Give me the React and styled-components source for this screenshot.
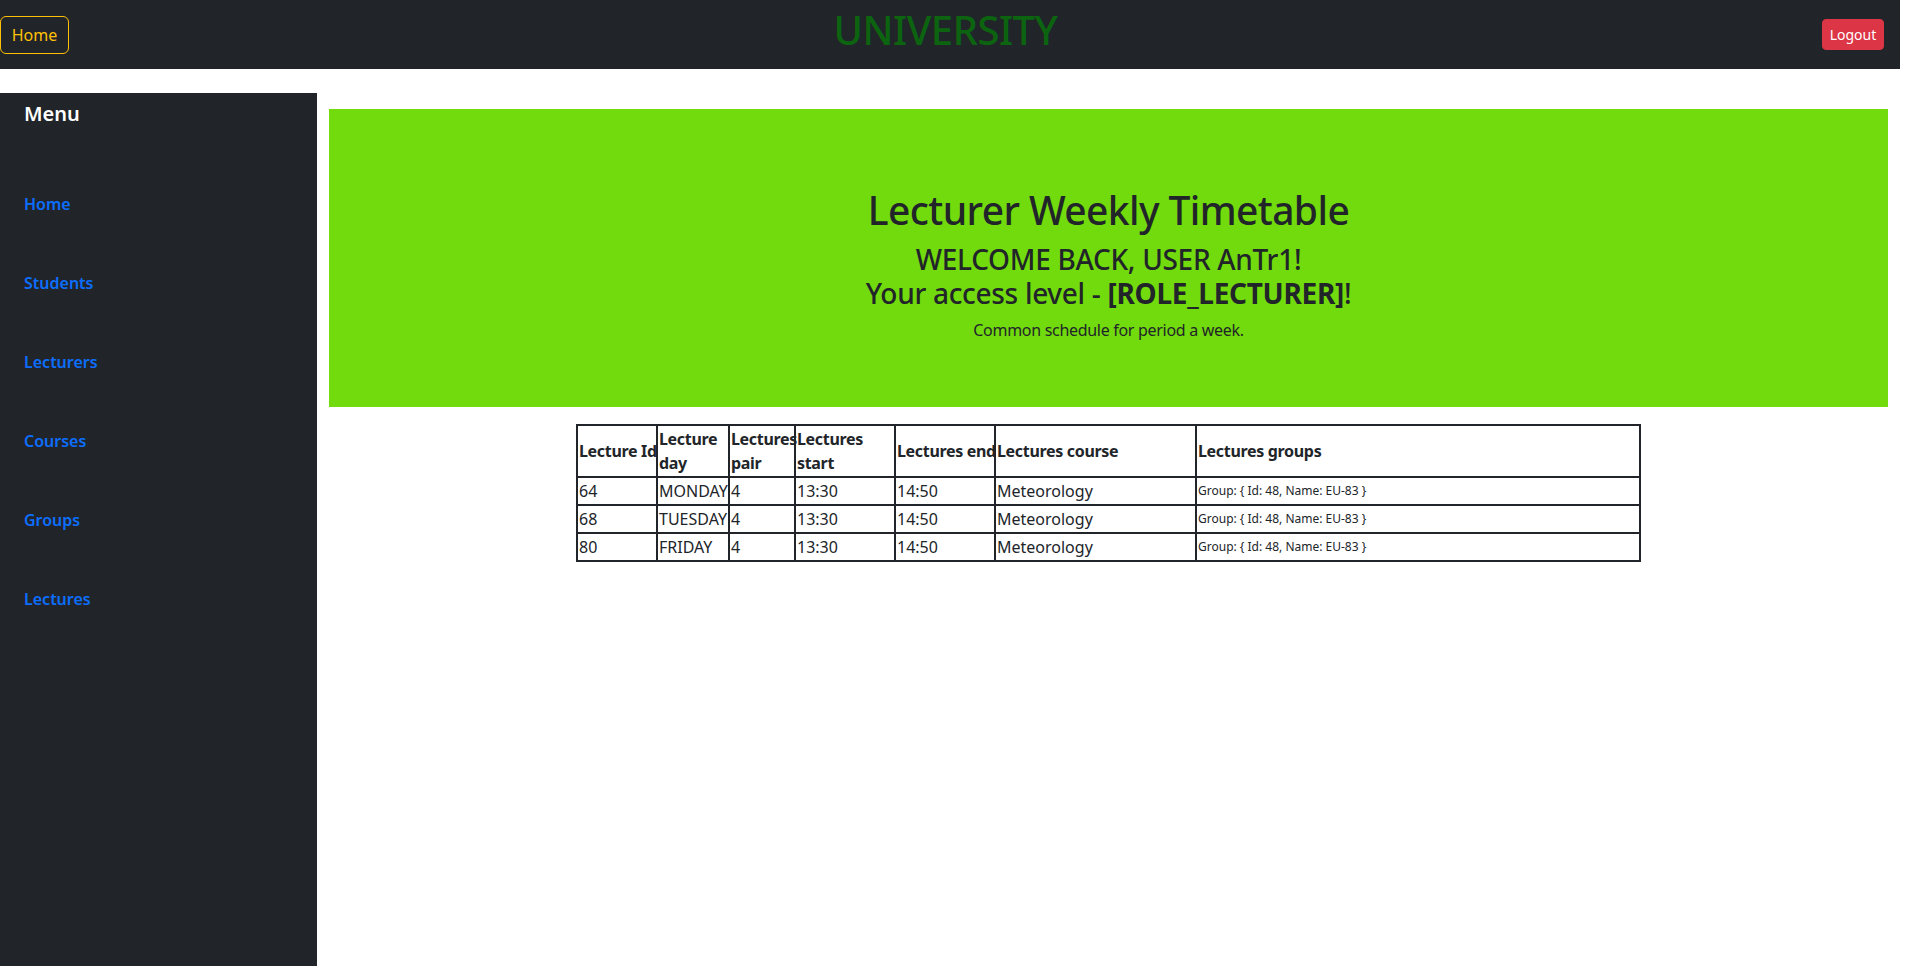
import React from "react";
import styled, { createGlobalStyle } from "styled-components";

const Global = createGlobalStyle`
  html, body { margin: 0; padding: 0; background: #fff; }
  body {
    font-family: "Noto Sans", "Open Sans", "Liberation Sans", sans-serif;
    font-size: 16px;
    line-height: 1.5;
    color: #212529;
  }
  * { box-sizing: border-box; }
`;

const Page = styled.div`
  width: calc(100vw - 17px);
`;

const Navbar = styled.header`
  height: 69px;
  background: #212529;
  display: flex;
  align-items: center;
  justify-content: space-between;
  padding: 0 16px 0 0;
`;

const OutlineButton = styled.button`
  font-family: inherit;
  font-size: 16px;
  line-height: 24px;
  height: 38px;
  width: 69px;
  padding: 6px 0;
  color: #ffc107;
  background: transparent;
  border: 1px solid #ffc107;
  border-radius: 6px;
  margin-top: 1px;
`;

const Brand = styled.h1`
  margin: 0 0 10px 0;
  font-size: 40px;
  line-height: 48px;
  font-weight: 500;
  letter-spacing: -0.5px;
  color: #0c6410;
`;

const DangerButton = styled.button`
  font-family: inherit;
  font-size: 14px;
  line-height: 21px;
  height: 31px;
  width: 62px;
  padding: 4px 0;
  color: #fff;
  background: #dc3545;
  border: 1px solid #dc3545;
  border-radius: 4px;
`;

const Layout = styled.div`
  display: flex;
  align-items: flex-start;
  margin-top: 24px;
`;

const Sidebar = styled.aside`
  flex: 0 0 317px;
  width: 317px;
  height: 100vh;
  background: #212529;
  padding: 9px 24px;
`;

const MenuTitle = styled.h5`
  margin: 0;
  font-size: 20px;
  line-height: 24px;
  font-weight: 600;
  color: #fff;
`;

const NavList = styled.nav`
  display: flex;
  flex-direction: column;
  gap: 55px;
  margin-top: 66px;
`;

const NavLink = styled.a`
  font-size: 16px;
  line-height: 24px;
  font-weight: 600;
  color: #0d6efd;
  text-decoration: none;
`;

const Main = styled.main`
  flex: 1;
  min-width: 0;
  padding: 16px 12px 0;
`;

const Banner = styled.section`
  background: #72db0d;
  height: 298px;
  padding-top: 77px;
  text-align: center;
`;

const Heading = styled.h1`
  margin: 0 0 8px;
  font-size: 39px;
  line-height: 48px;
  font-weight: 500;
  letter-spacing: -0.6px;
`;

const SubHeading = styled.h3`
  margin: 0 0 8px;
  font-size: 28px;
  line-height: 34px;
  font-weight: 500;
  letter-spacing: -0.3px;
`;

const Lead = styled.p`
  margin: 0;
  font-size: 16px;
  line-height: 24px;
  letter-spacing: -0.3px;
`;

const Table = styled.table`
  margin: 17px auto 0;
  width: 1063px;
  table-layout: fixed;
  border-collapse: collapse;
  border: 2px solid #212529;
`;

const Th = styled.th`
  border: 2px solid #212529;
  padding: 0 1px;
  text-align: left;
  vertical-align: middle;
  font-weight: 700;
  font-size: 16px;
  line-height: 24px;
  letter-spacing: -0.02em;
  white-space: ${(p) => (p.$nowrap ? "nowrap" : "normal")};
  height: 52px;
`;

const Td = styled.td`
  border: 2px solid #212529;
  padding: 0 1px;
  vertical-align: middle;
  font-size: ${(p) => (p.$small ? "12px" : "16px")};
  line-height: 24px;
  white-space: nowrap;
  height: 28px;
`;

const cols = [80, 72, 66, 100, 100, 201, 444];
const headers = [
  ["Lecture Id", true],
  ["Lecture day", false],
  ["Lectures pair", false],
  ["Lectures start", false],
  ["Lectures end", true],
  ["Lectures course", true],
  ["Lectures groups", true],
];
const rows = [
  ["64", "MONDAY"],
  ["68", "TUESDAY"],
  ["80", "FRIDAY"],
];

export default function App() {
  return (
    <Page>
      <Global />
      <Navbar>
        <OutlineButton>Home</OutlineButton>
        <Brand>UNIVERSITY</Brand>
        <DangerButton>Logout</DangerButton>
      </Navbar>
      <Layout>
        <Sidebar>
          <MenuTitle>Menu</MenuTitle>
          <NavList>
            {["Home", "Students", "Lecturers", "Courses", "Groups", "Lectures"].map((l) => (
              <NavLink key={l} href="#">{l}</NavLink>
            ))}
          </NavList>
        </Sidebar>
        <Main>
          <Banner>
            <Heading>Lecturer Weekly Timetable</Heading>
            <SubHeading>
              WELCOME BACK, USER AnTr1!
              <br />
              Your access level - <b>[ROLE_LECTURER]</b>!
            </SubHeading>
            <Lead>Common schedule for period a week.</Lead>
          </Banner>
          <Table>
            <colgroup>
              {cols.map((w, i) => (
                <col key={i} style={{ width: w }} />
              ))}
            </colgroup>
            <thead>
              <tr>
                {headers.map(([h, nw]) => (
                  <Th key={h} $nowrap={nw}>{h}</Th>
                ))}
              </tr>
            </thead>
            <tbody>
              {rows.map(([id, day]) => (
                <tr key={id}>
                  <Td>{id}</Td>
                  <Td>{day}</Td>
                  <Td>4</Td>
                  <Td>13:30</Td>
                  <Td>14:50</Td>
                  <Td>Meteorology</Td>
                  <Td $small>Group: {"{"} Id: 48, Name: EU-83 {"}"}</Td>
                </tr>
              ))}
            </tbody>
          </Table>
        </Main>
      </Layout>
    </Page>
  );
}
